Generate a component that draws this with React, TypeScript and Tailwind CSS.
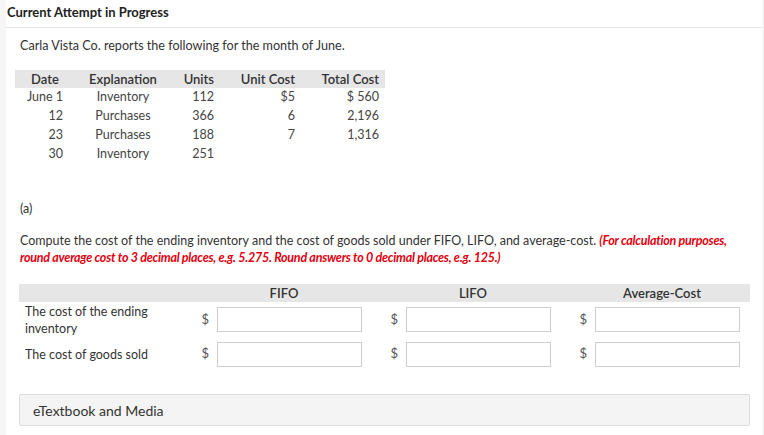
import React from "react";

const rows = [
  { d: "June 1", e: "Inventory", u: "112", uc: "$5", tc: "$ 560" },
  { d: "12", e: "Purchases", u: "366", uc: "6", tc: "2,196" },
  { d: "23", e: "Purchases", u: "188", uc: "7", tc: "1,316" },
  { d: "30", e: "Inventory", u: "251", uc: "", tc: "" },
];

function Cell() {
  return (
    <div className="flex items-center justify-end pr-[10px]">
      <span className="mr-[8px] text-[13px] text-[#555]">$</span>
      <div className="h-[25px] w-[145px] border border-[#cfcfcf] bg-white"></div>
    </div>
  );
}

export default function App() {
  return (
    <div className="flex min-h-[435px] w-[764px] bg-[#f6f6f6] font-['Lato','Liberation_Sans',sans-serif] text-[#333]">
      <div className="w-[6px] shrink-0"></div>
      <div className="flex-1 border-r border-[#ececec] bg-white">
        <div className="flex h-[28px] items-center border-b border-[#e6e6e6] pl-[1px] pb-[1px] text-[13px] font-bold text-[#222]">
          Current Attempt in Progress
        </div>
        <div className="pl-[9px] pr-[12px]">
          <div className="pl-[5px] pt-[9px] text-[12.6px] leading-[17px]">
            Carla Vista Co. reports the following for the month of June.
          </div>
          <div className="mt-[16px] w-[370px] text-[12.5px]">
            <div className="grid h-[18px] grid-cols-[60px_96px_49px_81px_84px] items-center bg-[#e6e6e6] text-[13px] font-semibold text-[#333]">
              <div className="text-center">Date</div>
              <div className="text-center">Explanation</div>
              <div className="pr-[6px] text-right">Units</div>
              <div className="pr-[6px] text-right">Unit Cost</div>
              <div className="pr-[6px] text-right">Total Cost</div>
            </div>
            {rows.map((r) => (
              <div
                key={r.d}
                className="grid h-[19px] grid-cols-[60px_96px_49px_81px_84px] items-center text-[#444]"
              >
                <div className="pr-[12px] text-right">{r.d}</div>
                <div className="text-center">{r.e}</div>
                <div className="pr-[6px] text-right">{r.u}</div>
                <div className="pr-[6px] text-right">{r.uc}</div>
                <div className="pr-[6px] text-right">{r.tc}</div>
              </div>
            ))}
          </div>
          <div className="mt-[36px] pl-[5px] text-[12.5px] leading-[17px]">(a)</div>
          <div className="mt-[15px] pl-[5px] text-[12.5px] leading-[17px]">
            Compute the cost of the ending inventory and the cost of goods sold under FIFO, LIFO, and average-cost.{" "}
            <span className="font-bold italic tracking-[-0.25px] text-[#e3000f]">
              (For calculation purposes, round average cost to 3 decimal places, e.g. 5.275. Round answers to 0 decimal places, e.g. 125.)
            </span>
          </div>
          <div className="mt-[18px] ml-[4px] w-[731px] text-[12.5px]">
            <div className="grid h-[18px] grid-cols-[164px_189px_189px_189px] items-center bg-[#e6e6e6] text-[13px] font-semibold">
              <div></div>
              <div className="flex justify-end pr-[10px]"><div className="w-[159px] pl-[3px] text-center">FIFO</div></div>
              <div className="flex justify-end pr-[10px]"><div className="w-[159px] pl-[3px] text-center">LIFO</div></div>
              <div className="flex justify-end pr-[10px]"><div className="w-[159px] pl-[3px] text-center">Average-Cost</div></div>
            </div>
            <div className="grid h-[35px] grid-cols-[164px_189px_189px_189px] items-center">
              <div className="w-[140px] pl-[6px] leading-[17px]">The cost of the ending inventory</div>
              <Cell />
              <Cell />
              <Cell />
            </div>
            <div className="grid h-[34px] grid-cols-[164px_189px_189px_189px] items-center">
              <div className="pl-[6px] leading-[17px]">The cost of goods sold</div>
              <Cell />
              <Cell />
              <Cell />
            </div>
          </div>
          <div className="mt-[23px] ml-[4px] flex h-[32px] w-[731px] items-center rounded-[2px] border border-[#dcdcdc] bg-[#f4f4f4] pl-[13px] text-[14px] text-[#333]">
            eTextbook and Media
          </div>
        </div>
      </div>
    </div>
  );
}
